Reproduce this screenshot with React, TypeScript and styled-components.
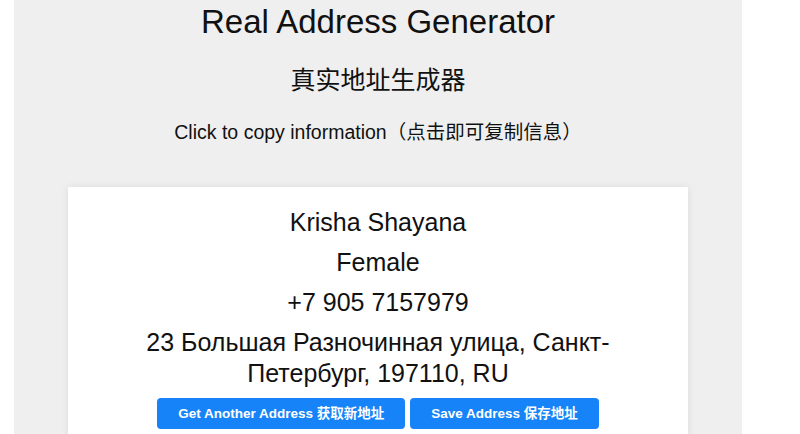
import * as React from "react";
import styled, { createGlobalStyle } from "styled-components";

const GlobalStyle = createGlobalStyle`
  html, body {
    margin: 0;
    padding: 0;
    background: #ffffff;
    font-family: "Liberation Sans", Arial, "Noto Sans CJK SC", sans-serif;
    color: #111;
  }
`;

interface IPerson {
  name: string;
  gender: string;
  phone: string;
  address: string;
}

const person: IPerson = {
  name: "Krisha Shayana",
  gender: "Female",
  phone: "+7 905 7157979",
  address: "23 Большая Разночинная улица, Санкт-Петербург, 197110, RU",
};

const App: React.FunctionComponent = () => {
  const copy = (text: string) => {
    if (navigator.clipboard) navigator.clipboard.writeText(text).catch(() => {});
  };

  return (
    <Page>
      <GlobalStyle />
      <Panel>
        <Title>Real Address Generator</Title>
        <Subtitle>真实地址生成器</Subtitle>
        <Hint>Click to copy information（点击即可复制信息）</Hint>
        <Card>
          <Field onClick={() => copy(person.name)}>{person.name}</Field>
          <Field onClick={() => copy(person.gender)}>{person.gender}</Field>
          <Field onClick={() => copy(person.phone)}>{person.phone}</Field>
          <Field onClick={() => copy(person.address)}>{person.address}</Field>
          <Actions>
            <Button>Get Another Address 获取新地址</Button>
            <Button>Save Address 保存地址</Button>
          </Actions>
        </Card>
      </Panel>
    </Page>
  );
};

export default App;

const Page = styled.div`
  display: flex;
  padding-left: 14px;
  min-height: 100vh;
`;

const Panel = styled.main`
  width: 728px;
  background: #efefef;
  display: flex;
  flex-direction: column;
  align-items: center;
  padding-top: 3px;
`;

const Title = styled.h1`
  margin: 0;
  font-size: 33px;
  font-weight: 400;
  line-height: 38px;
`;

const Subtitle = styled.h2`
  margin: 19px 0 0;
  font-family: "Noto Sans CJK SC", sans-serif;
  font-size: 25px;
  font-weight: 400;
  line-height: 36px;
`;

const Hint = styled.p`
  margin: 24px 0 0;
  font-size: 19.5px;
  line-height: 24px;
`;

const Card = styled.section`
  margin-top: 43px;
  width: 620px;
  box-sizing: border-box;
  background: #fff;
  padding: 20px 36px 24px;
  box-shadow: 0 0 8px rgba(0, 0, 0, 0.08);
  display: flex;
  flex-direction: column;
  align-items: center;
  gap: 9px;
  text-align: center;
`;

const Field = styled.div`
  font-size: 25px;
  line-height: 31px;
  cursor: pointer;
`;

const Actions = styled.div`
  display: flex;
  gap: 5px;
`;

const Button = styled.button`
  border: none;
  border-radius: 4px;
  background: #1684f8;
  color: #fff;
  font-family: "Liberation Sans", Arial, "Noto Sans CJK SC", sans-serif;
  font-size: 13.5px;
  font-weight: 600;
  line-height: 15px;
  padding: 8px 21px;
  cursor: pointer;
`;
